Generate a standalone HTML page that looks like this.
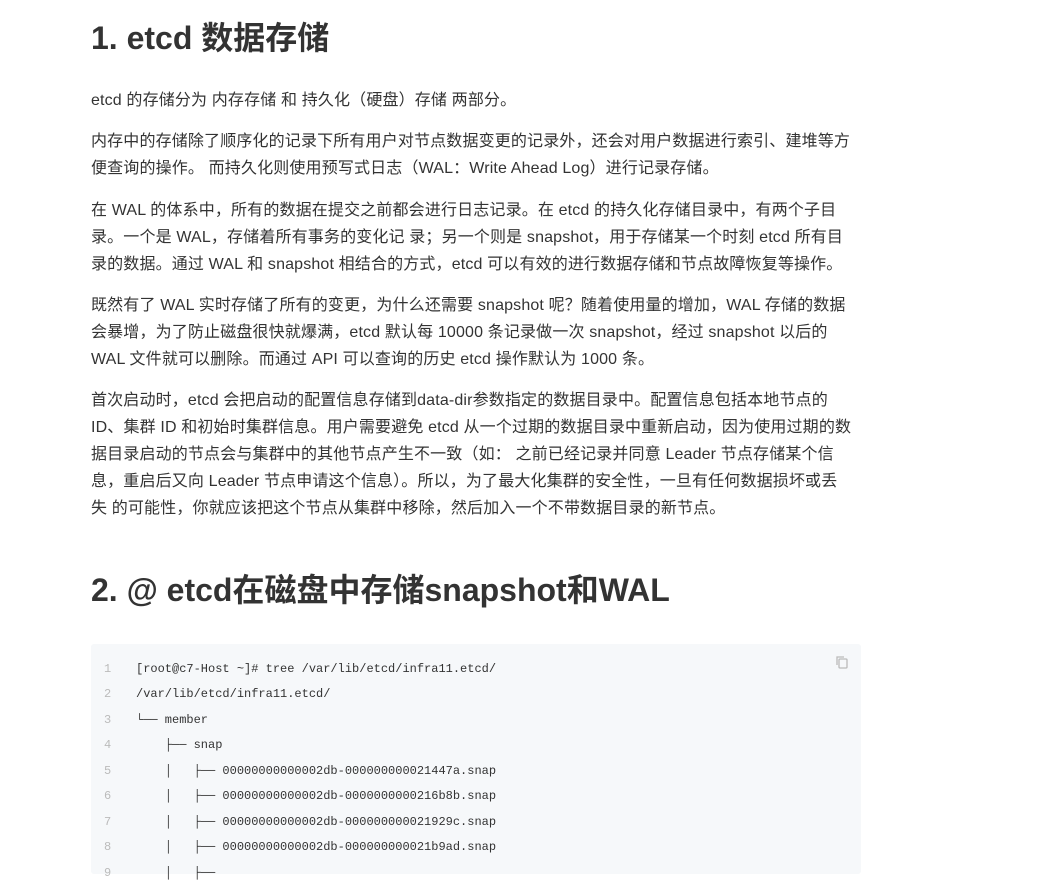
<!DOCTYPE html>
<html><head><meta charset="utf-8"><style>
body{margin:0;background:#fff;color:#333;font-family:"Liberation Sans","Noto Sans CJK SC",sans-serif;}
.w{position:absolute;left:91px;width:800px;}
h1,h2{margin:0;font-weight:bold;font-size:32px;color:#333;white-space:nowrap;}
p{margin:0 0 14.5px;font-size:16px;line-height:26.9px;white-space:nowrap;letter-spacing:0.15px;}
.code{position:absolute;left:91px;top:644px;width:770px;height:230px;background:#f6f8fa;border-radius:3px;font-family:"Liberation Mono","DejaVu Sans Mono",monospace;font-size:12px;}
.l{position:absolute;left:0;height:25px;line-height:25px;white-space:pre;}
.n{position:absolute;left:13px;color:#bbb;width:10px;}
.t{position:absolute;left:45px;color:#333;}
</style></head><body>
<h1 class="w" style="top:13px">1. etcd 数据存储</h1>
<div class="w" style="top:88px">
<p>etcd 的存储分为 内存存储 和 持久化（硬盘）存储 两部分。</p>
<p>内存中的存储除了顺序化的记录下所有用户对节点数据变更的记录外，还会对用户数据进行索引、建堆等方<br>便查询的操作。 而持久化则使用预写式日志（WAL：Write Ahead Log）进行记录存储。</p>
<p>在 WAL 的体系中，所有的数据在提交之前都会进行日志记录。在 etcd 的持久化存储目录中，有两个子目<br>录。一个是 WAL，存储着所有事务的变化记 录；另一个则是 snapshot，用于存储某一个时刻 etcd 所有目<br>录的数据。通过 WAL 和 snapshot 相结合的方式，etcd 可以有效的进行数据存储和节点故障恢复等操作。</p>
<p>既然有了 WAL 实时存储了所有的变更，为什么还需要 snapshot 呢？随着使用量的增加，WAL 存储的数据<br>会暴增，为了防止磁盘很快就爆满，etcd 默认每 10000 条记录做一次 snapshot，经过 snapshot 以后的<br>WAL 文件就可以删除。而通过 API 可以查询的历史 etcd 操作默认为 1000 条。</p>
<p>首次启动时，etcd 会把启动的配置信息存储到data-dir参数指定的数据目录中。配置信息包括本地节点的<br>ID、集群 ID 和初始时集群信息。用户需要避免 etcd 从一个过期的数据目录中重新启动，因为使用过期的数<br>据目录启动的节点会与集群中的其他节点产生不一致（如： 之前已经记录并同意 Leader 节点存储某个信<br>息，重启后又向 Leader 节点申请这个信息）。所以，为了最大化集群的安全性，一旦有任何数据损坏或丢<br>失 的可能性，你就应该把这个节点从集群中移除，然后加入一个不带数据目录的新节点。</p>
</div>
<h2 class="w" style="top:565px">2. @ etcd在磁盘中存储snapshot和WAL</h2>
<div class="code">
<svg style="position:absolute;left:744px;top:11px" width="14" height="14" viewBox="0 0 14 14" fill="none" stroke="#bbb" stroke-width="1.3"><rect x="4" y="4" width="8" height="9" rx="1"/><path d="M2 10V2h7"/></svg>
<div class="l" style="top:13px"><span class="n">1</span><span class="t">[root@c7-Host ~]# tree /var/lib/etcd/infra11.etcd/</span></div>
<div class="l" style="top:38px"><span class="n">2</span><span class="t">/var/lib/etcd/infra11.etcd/</span></div>
<div class="l" style="top:64px"><span class="n">3</span><span class="t">└── member</span></div>
<div class="l" style="top:89px"><span class="n">4</span><span class="t">    ├── snap</span></div>
<div class="l" style="top:115px"><span class="n">5</span><span class="t">    │   ├── 00000000000002db-000000000021447a.snap</span></div>
<div class="l" style="top:140px"><span class="n">6</span><span class="t">    │   ├── 00000000000002db-0000000000216b8b.snap</span></div>
<div class="l" style="top:166px"><span class="n">7</span><span class="t">    │   ├── 00000000000002db-000000000021929c.snap</span></div>
<div class="l" style="top:191px"><span class="n">8</span><span class="t">    │   ├── 00000000000002db-000000000021b9ad.snap</span></div>
<div class="l" style="top:217px"><span class="n">9</span><span class="t">    │   ├──</span></div>
</div>
</body></html>
